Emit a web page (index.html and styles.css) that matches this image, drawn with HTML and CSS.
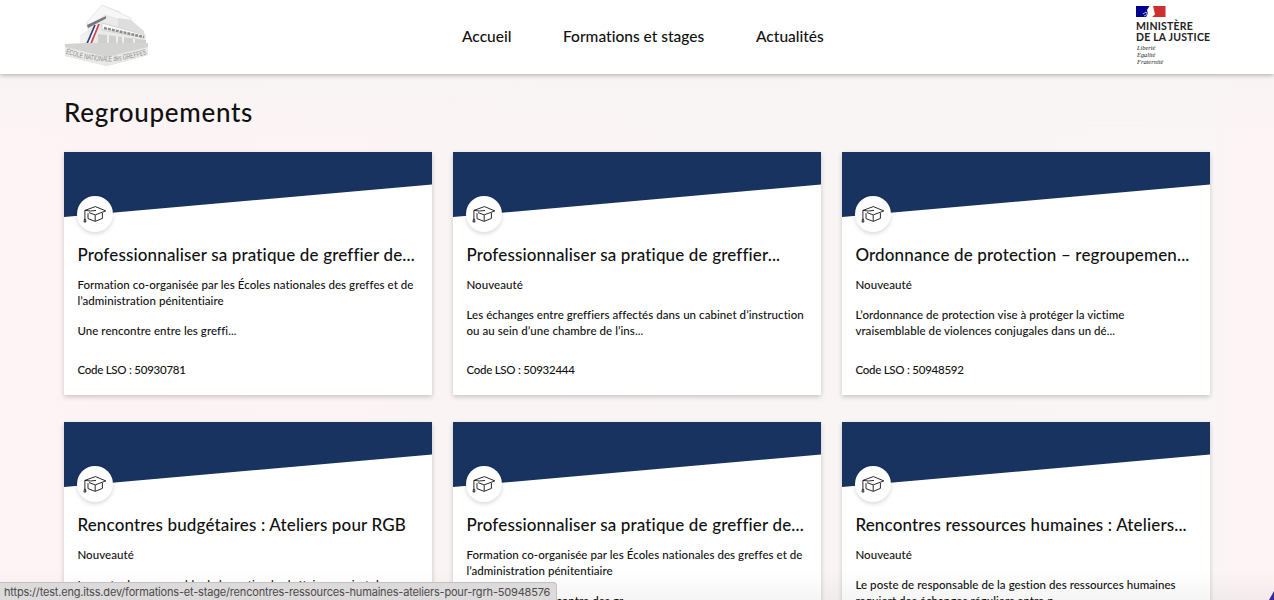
FILE: index.html
```html
<!DOCTYPE html>
<html lang="fr">
<head>
  <meta charset="UTF-8" />
  <meta name="viewport" content="width=device-width, initial-scale=1.0" />
  <title>Regroupements</title>
  <link rel="stylesheet" href="styles.css">
</head>
<body>
  <svg width="0" height="0" class="sprite">
    <symbol id="cap" viewBox="0 0 24 20">
      <path d="M1.9 5.4 L12.4 1.6 L22.8 5.9 L12.2 9.9 L6 7.6 M5 8.2 V13.6 L12.2 16.4 L19.4 13.4 V8 M12.2 10.2 V16 M13 5.4 L7.5 6 L1.9 5.4 V14.5" />
      <path d="M1.4 14.3 H2.6 L2.9 17 H1 Z" />
    </symbol>
  </svg>

  <header class="header">
    <svg class="logo-eng" width="86" height="64" viewBox="0 0 86 64">
      <path d="M16 32 L24 27 L31 43 L16 44 Z" fill="#f1f1f1" />
      <path d="M22 21 L38 2 L55 8 L81 31 L82 43 L28 44 Z" fill="#eaeaea" />
      <path d="M23 19 L38 2 L67 15 L68 21 L41 12 L24 25 Z" fill="#f7f7f7" stroke="#d9d9d9" stroke-width=".5" />
      <path d="M23 22 L42 13 V15.5 L24 25 Z" fill="#777777" />
      <path d="M54 15 L67 17 L80 28 V31 L54 24 Z" fill="#dedede" />
      <path d="M38 20 L81 32 V35 L38 27 Z" fill="#fafafa" stroke="#b4b4b4" stroke-width=".5" />
      <path d="M40 25 L80 34" stroke="#8d8d8d" stroke-width="2.5" stroke-dasharray="3 1" />
      <path d="M34 31 L82 37 V43 L34 43 Z" fill="#cfcfcf" />
      <path d="M44 32 V43 M53 33 V43 M59 34 V43 M70 36 V43" stroke="#eeeeee" stroke-width="2" />
      <path d="M22 43 L31 22" stroke="#34427f" stroke-width="1.8" />
      <path d="M24 43 L33 22" stroke="#ffffff" stroke-width="1.5" />
      <path d="M26 43 L35 21" stroke="#d04556" stroke-width="1.8" />
      <path d="M1 41 L22 40 L84 40 V52 L43 63 L1 53 Z" fill="#d3d3d1" />
      <path d="M1 44 L43 54 L84 44 V52 L43 63 L1 53 Z" fill="#e9e9e7" />
      <path id="band" d="M1.5 50.5 Q22 57.5 43 58.5 Q64 57.5 84 50.5" fill="none" />
      <text class="logo-text"><textPath href="#band" textLength="83" lengthAdjust="spacingAndGlyphs">ÉCOLE NATIONALE des GREFFES</textPath></text>
    </svg>

    <nav class="nav">
      <a class="nav-accueil">Accueil</a>
      <a class="nav-formations">Formations et stages</a>
      <a class="nav-actus">Actualités</a>
    </nav>

    <div class="ministere">
      <svg class="flag" width="30" height="11" viewBox="0 0 30 11">
        <path d="M0 0 H13.5 L11 4 L12 8 L10 11 H0 Z" fill="#000091" />
        <path d="M17 0 H29.5 V11 H16 L19 8.5 L18 4 Z" fill="#ce3030" />
        <path d="M7 8 L10 6 L12 9 M8 10 L12 8" stroke="#b8b8dc" stroke-width="1" fill="none" />
      </svg>
      <div class="ministere-name">MINISTÈRE<br>DE LA JUSTICE</div>
      <div class="devise">Liberté<br>Égalité<br>Fraternité</div>
    </div>
  </header>

  <main class="content">
    <h1>Regroupements</h1>

    <div class="cards">
      <article class="card">
        <div class="banner"></div>
        <div class="badge"><svg class="cap"><use href="#cap" /></svg></div>
        <div class="card-body">
          <h2>Professionnaliser sa pratique de greffier de...</h2>
          <p>Formation co-organisée par les Écoles nationales des greffes et de<br>l’administration pénitentiaire</p>
          <p>Une rencontre entre les greffi...</p>
          <p class="code">Code LSO : 50930781</p>
        </div>
      </article>

      <article class="card">
        <div class="banner"></div>
        <div class="badge"><svg class="cap"><use href="#cap" /></svg></div>
        <div class="card-body">
          <h2>Professionnaliser sa pratique de greffier...</h2>
          <p>Nouveauté</p>
          <p>Les échanges entre greffiers affectés dans un cabinet d’instruction<br>ou au sein d’une chambre de l’ins...</p>
          <p class="code">Code LSO : 50932444</p>
        </div>
      </article>

      <article class="card">
        <div class="banner"></div>
        <div class="badge"><svg class="cap"><use href="#cap" /></svg></div>
        <div class="card-body">
          <h2>Ordonnance de protection – regroupemen...</h2>
          <p>Nouveauté</p>
          <p>L’ordonnance de protection vise à protéger la victime<br>vraisemblable de violences conjugales dans un dé...</p>
          <p class="code">Code LSO : 50948592</p>
        </div>
      </article>

      <article class="card">
        <div class="banner"></div>
        <div class="badge"><svg class="cap"><use href="#cap" /></svg></div>
        <div class="card-body">
          <h2>Rencontres budgétaires : Ateliers pour RGB</h2>
          <p>Nouveauté</p>
          <p>Le poste de responsable de la gestion budgétaire requiert de</p>
        </div>
      </article>

      <article class="card">
        <div class="banner"></div>
        <div class="badge"><svg class="cap"><use href="#cap" /></svg></div>
        <div class="card-body">
          <h2>Professionnaliser sa pratique de greffier de...</h2>
          <p>Formation co-organisée par les Écoles nationales des greffes et de<br>l’administration pénitentiaire</p>
          <p>Cette journée rencontre des gr...</p>
        </div>
      </article>

      <article class="card">
        <div class="banner"></div>
        <div class="badge"><svg class="cap"><use href="#cap" /></svg></div>
        <div class="card-body">
          <h2>Rencontres ressources humaines : Ateliers...</h2>
          <p>Nouveauté</p>
          <p>Le poste de responsable de la gestion des ressources humaines<br>requiert des échanges réguliers entre p...</p>
        </div>
      </article>
    </div>
  </main>

  <div class="fade"></div>
  <div class="status-url">https://test.eng.itss.dev/formations-et-stage/rencontres-ressources-humaines-ateliers-pour-rgrh-50948576</div>
  <div class="corner"></div>
</body>
</html>
```
FILE: styles.css
```css
* {
  box-sizing: border-box;
}
body {
  margin: 0;
  height: 600px;
  overflow: hidden;
  font-family: Lato, "Noto Sans", sans-serif;
  font-weight: 500;
  font-variant-ligatures: none;
  color: #111;
  background:
    linear-gradient(#f8f5f4 74px, rgba(248, 245, 244, 0) 135px),
    linear-gradient(90deg, #fef3f5 0, #fbf4f5 450px, #f9f5f5 850px, #f9f6f5 1215px, #fef3f5 1240px);
}
.sprite {
  position: absolute;
}
.header {
  position: relative;
  display: flex;
  align-items: flex-start;
  justify-content: space-between;
  height: 74px;
  padding: 3px 63px 0 64px;
  background: #fff;
  box-shadow: 0 1px 5px rgba(0, 0, 0, 0.32);
}
.logo-text {
  font-family: "Liberation Sans", sans-serif;
  font-size: 7.5px;
  fill: #8d8d8d;
}
.nav {
  display: flex;
  gap: 51px;
  padding: 23px 0 0;
  font-size: 15.5px;
  line-height: 20px;
  white-space: nowrap;
}
.nav-accueil {
  width: 50px;
}
.nav-formations {
  width: 142px;
}
.nav-actus {
  width: 68px;
}
.ministere {
  width: 75px;
  padding-top: 3px;
  white-space: nowrap;
}
.flag {
  display: block;
}
.ministere-name {
  margin-top: 4px;
  font-size: 10.5px;
  font-weight: 700;
  line-height: 11px;
  letter-spacing: 0.2px;
  color: #222;
}
.devise {
  margin: 1px 0 0 1px;
  font: italic 6.4px/7px "Liberation Serif", serif;
  color: #222;
}
.content {
  padding: 21px 64px 0;
}
h1 {
  margin: 0 0 23px;
  font-size: 26px;
  font-weight: 500;
  line-height: 34px;
  letter-spacing: 0.7px;
}
.cards {
  display: grid;
  grid-template-columns: repeat(3, 368px);
  gap: 27px 21px;
}
.card {
  position: relative;
  height: 243px;
  background: #fff;
  box-shadow: 0 2px 5px rgba(0, 0, 0, 0.2);
  white-space: nowrap;
}
.banner {
  height: 65px;
  background: #18335f;
  clip-path: polygon(0 0, 100% 0, 100% 50%, 0 100%);
}
.badge {
  position: absolute;
  top: 44px;
  left: 13px;
  display: flex;
  align-items: center;
  justify-content: center;
  width: 36px;
  height: 36px;
  border-radius: 50%;
  background: #fff;
  box-shadow: 0 2px 4px rgba(0, 0, 0, 0.15);
}
.cap {
  width: 24px;
  height: 20px;
  margin-top: 1px;
  fill: none;
  stroke: #111;
  stroke-width: 0.9;
}
.card-body {
  padding: 26px 13px 0 13.4px;
}
h2 {
  margin: 0 0 11px;
  font-size: 17px;
  font-weight: 500;
  line-height: 23px;
  letter-spacing: 0.15px;
}
p {
  margin: 0 0 14px;
  font-size: 11.5px;
  line-height: 16px;
  letter-spacing: 0.06px;
}
.code {
  margin-top: 23px;
  letter-spacing: -0.25px;
}
.fade {
  position: absolute;
  left: 0;
  right: 0;
  top: 570px;
  height: 30px;
  background: linear-gradient(rgba(0, 0, 0, 0), rgba(0, 0, 0, 0.04));
}
.status-url {
  position: absolute;
  left: 0;
  top: 582px;
  width: 557px;
  height: 18px;
  padding-left: 4px;
  border: 1px solid #c4c1c2;
  border-width: 1px 1px 0 0;
  border-radius: 0 4px 0 0;
  background: #dddadb;
  color: #4b4b4b;
  font: 11px/18px Inter, sans-serif;
  letter-spacing: -0.18px;
  white-space: nowrap;
}
.corner {
  position: absolute;
  right: 0;
  top: 591px;
  width: 5px;
  height: 9px;
  background: #3c2a9b;
  clip-path: polygon(100% 0, 100% 100%, 0 100%);
}
```
